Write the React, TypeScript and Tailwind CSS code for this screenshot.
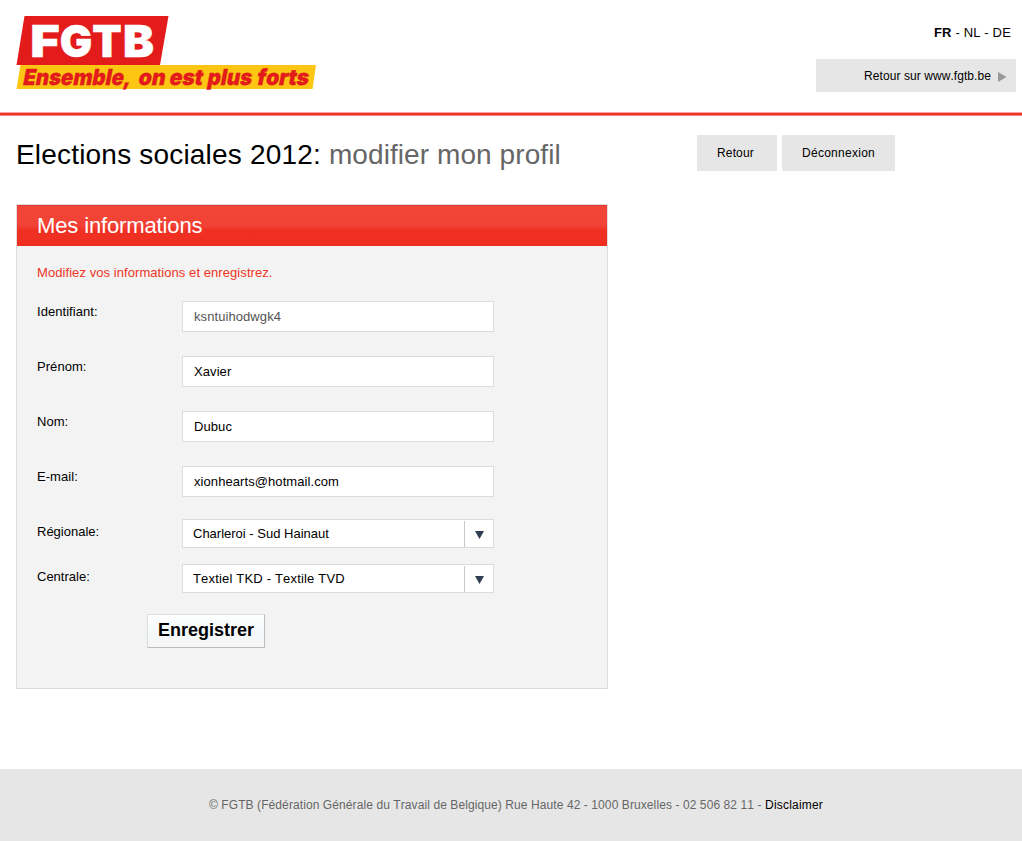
import React from "react";

const fields = [
  { label: "Identifiant:", value: "ksntuihodwgk4", disabled: true },
  { label: "Prénom:", value: "Xavier" },
  { label: "Nom:", value: "Dubuc" },
  { label: "E-mail:", value: "xionhearts@hotmail.com" },
];

const selects = [
  { label: "Régionale:", value: "Charleroi - Sud Hainaut", tracking: "tracking-normal" },
  { label: "Centrale:", value: "Textiel TKD - Textile TVD", tracking: "tracking-[0.18px]" },
];

const letters = [
  { text: "F", x: 14.3, width: 29.5 },
  { text: "G", x: 43.8, width: 32.5 },
  { text: "T", x: 76.3, width: 29.5 },
  { text: "B", x: 107, width: 31 },
];

const words = [
  { text: "Ensemble,", x: 6.3, width: 108 },
  { text: "on", x: 121.5, width: 27 },
  { text: "est", x: 152.5, width: 33.5 },
  { text: "plus", x: 190.5, width: 44.5 },
  { text: "forts", x: 240, width: 52 },
];

function Logo() {
  return (
    <svg width="300" height="73" viewBox="0 0 300 73" className="block overflow-visible">
      <path d="M8.500 0H152.500L144 49H0.500Z" fill="#e31b1b" />
      <path d="M4.500 49H300L296.500 73H0.500Z" fill="#fdc613" />
      <g
        fontFamily="Inter, sans-serif"
        fontWeight="900"
        fontSize="44.500"
        fill="#fff"
        stroke="#fff"
        strokeWidth="0.500"
      >
        {letters.map((l) => (
          <text key={l.text} x={l.x} y="41" textLength={l.width} lengthAdjust="spacingAndGlyphs">
            {l.text}
          </text>
        ))}
      </g>
      <g
        transform="translate(0 69) skewX(-11)"
        fontFamily="Inter, sans-serif"
        fontWeight="900"
        fontSize="22"
        fill="#e31b1b"
        stroke="#e31b1b"
        strokeWidth="0.300"
      >
        {words.map((w) => (
          <text key={w.text} x={w.x} y="0" textLength={w.width} lengthAdjust="spacingAndGlyphs">
            {w.text}
          </text>
        ))}
      </g>
    </svg>
  );
}

export default function App() {
  return (
    <div className="flex h-[841px] w-[1022px] flex-col bg-white font-['Liberation_Sans',Arial,sans-serif] text-[13px] leading-5 text-black [font-kerning:none]">
      <header className="flex h-28 justify-between pl-4 pr-1.5 pt-4">
        <Logo />
        <div className="flex flex-col items-end">
          <div className="mt-[7px] pr-[5px] tracking-[0.16px]">
            <b>FR</b> - NL - DE
          </div>
          <a className="mt-4 flex h-[33px] w-[200px] items-center justify-end bg-[#e6e6e6] pr-[9px] text-xs tracking-[0.07px]">
            Retour sur www.fgtb.be
            <svg width="9" height="10" viewBox="0 0 9 10" className="ml-[7px] mt-[3px]">
              <path d="M0 0L8.500 5L0 10Z" fill="#999" />
            </svg>
          </a>
        </div>
      </header>
      <div className="h-1 shrink-0 border-b border-t border-b-[#f4877f] border-t-[#f9a9a3] bg-[#ee3524]" />

      <div className="flex h-[88px] shrink-0 pl-4 pt-[19px]">
        <h1 className="w-[681px] whitespace-nowrap text-[28px] leading-10 tracking-[0.19px]">
          Elections sociales 2012: <span className="tracking-[0.08px] text-[#666]">modifier mon profil</span>
        </h1>
        <nav className="flex h-9 gap-[5px] text-xs">
          <a className="flex w-20 items-center bg-[#e6e6e6] pl-5 tracking-[0.15px]">Retour</a>
          <a className="flex w-[113px] items-center bg-[#e6e6e6] pl-5 tracking-[0.27px]">Déconnexion</a>
        </nav>
      </div>

      <section className="ml-4 h-[485px] w-[592px] shrink-0 border border-[#dcdcdc] bg-[#f3f3f3]">
        <h2 className="h-[41px] border-t border-[#e0382a] bg-[linear-gradient(#f24537_0,#f14235_20px,#ef3022_24px,#ee2f20_100%)] pl-5 text-[22px] leading-10 tracking-[-0.13px] text-white">
          Mes informations
        </h2>
        <div className="px-5 pt-[17px]">
          <p className="tracking-[0.07px] text-[#ee3524]">Modifiez vos informations et enregistrez.</p>
          <div className="mt-[18px]">
            {fields.map((f) => (
              <div key={f.label} className="flex h-[55px]">
                <label className="w-[145px] pt-px tracking-[0.05px]">{f.label}</label>
                <div
                  className={`flex h-[31px] w-[312px] items-center border border-[#dcdcdc] bg-white pl-[11px] tracking-[0.08px] ${f.disabled ? "text-[#545454]" : "text-black"}`}
                >
                  {f.value}
                </div>
              </div>
            ))}
            {selects.map((s) => (
              <div key={s.label} className="flex h-[45px]">
                <label className="w-[145px] pt-px">{s.label}</label>
                <div className="-mt-0.5 flex h-[29px] w-[312px] items-center border border-[#dcdcdc] bg-white pl-2.5">
                  <span className={`flex-1 ${s.tracking}`}>{s.value}</span>
                  <span className="mt-px flex h-[26px] w-[29px] items-center justify-center border-l border-[#c8c8c8]">
                    <svg width="9" height="8" viewBox="0 0 9 8" className="ml-px mt-px">
                      <path d="M0 0H9L4.500 8Z" fill="#2f3e50" />
                    </svg>
                  </span>
                </div>
              </div>
            ))}
          </div>
          <button className="ml-[110px] mt-[3px] block h-[34px] w-[118px] border border-b-[#bbb] border-l-[#dcdcdc] border-r-[#bbb] border-t-[#dcdcdc] bg-[linear-gradient(#fff,#f5f9fb_50%,#f5f5f5)] pb-0.5 text-lg font-bold leading-7">
            Enregistrer
          </button>
        </div>
      </section>

      <footer className="mt-20 h-[72px] bg-[#e6e6e6] pl-2.5 pt-[26px] text-center text-xs leading-5 tracking-[0.09px] text-[#666]">
        © FGTB (Fédération Générale du Travail de Belgique) Rue Haute 42 - 1000 Bruxelles - 02 506 82 11 -{" "}
        <a className="tracking-[0.2px] text-black">Disclaimer</a>
      </footer>
    </div>
  );
}
